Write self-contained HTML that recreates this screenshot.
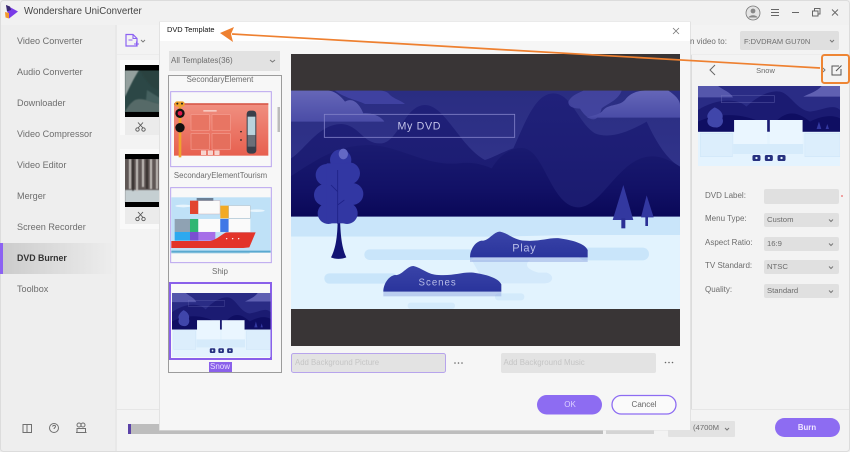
<!DOCTYPE html>
<html><head><meta charset="utf-8"><title>Wondershare UniConverter</title>
<style>
html,body{margin:0;padding:0;width:850px;height:452px;overflow:hidden;background:#f2f2f2}
body{position:relative;font-family:"Liberation Sans",sans-serif}
svg.g{position:absolute;left:0;top:0;filter:blur(.35px)}
.t{position:absolute;white-space:nowrap;line-height:12px;height:12px;font-size:9.1px;color:#6d6d6d;filter:blur(.2px)}
.s{left:17px}
.c{transform:translateX(-50%)}
.l{left:705px;font-size:8px}
.d{left:767px;font-size:7.700px}
</style></head><body>
<svg class="g" width="850" height="452" viewBox="0 0 850 452" xmlns="http://www.w3.org/2000/svg">
<defs>
<linearGradient id="sky" x1="0" y1="0" x2="0" y2="1"><stop offset="0" stop-color="#2a2d82"/><stop offset="1" stop-color="#35378f"/></linearGradient>
<linearGradient id="mid" x1="0" y1="0" x2="0" y2="1"><stop offset="0" stop-color="#20217a"/><stop offset="1" stop-color="#1a1a6e"/></linearGradient>
<linearGradient id="mtn" x1="0" y1="0" x2="0" y2="1"><stop offset="0" stop-color="#1a1b70"/><stop offset=".6" stop-color="#121166"/><stop offset="1" stop-color="#0a0858"/></linearGradient>
<linearGradient id="cl" x1="0" y1="0" x2="0" y2="1"><stop offset="0" stop-color="#6566b8"/><stop offset="1" stop-color="#4a4ca6"/></linearGradient>
<linearGradient id="act" x1="0" y1="0" x2="1" y2="0"><stop offset="0" stop-color="#cbcbcb"/><stop offset="1" stop-color="#eeeeee"/></linearGradient>
<linearGradient id="sal" x1="0" y1="0" x2="0" y2="1"><stop offset="0" stop-color="#f08f80"/><stop offset="1" stop-color="#e7604f"/></linearGradient>
<linearGradient id="isl" x1="0" y1="0" x2="0" y2="1"><stop offset="0" stop-color="#3a44a8"/><stop offset="1" stop-color="#2a349c"/></linearGradient>
<filter id="soft"><feGaussianBlur stdDeviation=".6"/></filter>
<symbol id="snow" viewBox="85 258 425 240" preserveAspectRatio="none">
<rect x="85" y="258" width="425" height="240" fill="#e4f3fe"/>
<rect x="85" y="258" width="425" height="137" fill="#2a2c85"/>
<path d="M85,258V292H190C180,275 160,270 145,258Z" fill="#5557ac"/>
<path d="M400,290C420,280 440,275 455,258H510V290Z" fill="#5f60b2"/>
<path d="M85,330C130,300 200,290 230,320 260,290 300,270 330,275 360,280 380,330 420,335 460,330 490,310 510,330V395H85Z" fill="#1b1b72"/>
<path d="M85,365C150,335 230,340 290,375V395H85ZM305,380C350,320 390,340 420,365 460,345 490,345 510,355V395H305Z" fill="#0f0e62"/>
<path d="M135,322C155,330 162,345 158,355 165,370 150,385 137,382 120,382 108,370 115,355 108,345 120,330 135,322Z" fill="#4046aa"/>
<path d="M447,365l7,22h-14ZM472,372l5,15h-10Z" fill="#3338a0"/>
<rect x="155" y="286" width="158" height="22" fill="none" stroke="#7778bf"/>
<rect x="92" y="400" width="96" height="70" fill="#dceefc" stroke="#c3def5"/>
<rect x="405" y="400" width="105" height="70" fill="#dceefc" stroke="#c3def5"/>
<rect x="193" y="360" width="99" height="72" fill="#eaf6ff"/>
<rect x="300" y="360" width="98" height="72" fill="#eaf6ff"/>
<rect x="190" y="432" width="210" height="30" fill="#d6ebfb"/>
<rect x="248" y="465" width="24" height="18" rx="5" fill="#26307f"/><rect x="285" y="465" width="24" height="18" rx="5" fill="#26307f"/><rect x="323" y="465" width="24" height="18" rx="5" fill="#26307f"/>
<circle cx="260" cy="474" r="3.500" fill="#e4f3fe"/><circle cx="297" cy="474" r="3.500" fill="#e4f3fe"/><circle cx="335" cy="474" r="3.500" fill="#e4f3fe"/>
</symbol>
</defs>

<!-- window -->
<rect width="850" height="452" fill="#f3f3f3"/>
<rect x="0" y="0" width="850" height="25" fill="#f1f1f1"/>
<rect x="0" y="25" width="115" height="427" fill="#eeeeee"/>
<rect x="115" y="25" width="2" height="427" fill="#e8e8e8"/>
<rect x="117" y="54" width="733" height="1" fill="#ececec"/>
<rect x="117" y="409" width="733" height="1" fill="#e6e6e6"/>
<rect x=".5" y=".5" width="849" height="451" rx="3" fill="none" stroke="#dcdcdc"/>
<!-- logo -->
<path d="M6,5 L18,11.500 L9,18.500 Z" fill="#7a3be8"/><path d="M6,5 L10,6.500 L11,10 L7,11.500Z" fill="#3a2a70"/><path d="M5,12 L9,13 L9,18.500 L5.500,17.500Z" fill="#f39a2d"/>
<!-- active -->
<rect x="0" y="243" width="115" height="31" fill="url(#act)"/>
<rect x="0" y="243" width="3" height="31" fill="#8c62f2"/>
<!-- bottom icons -->
<g fill="none" stroke="#707070" stroke-width="1">
<path d="M23,424.500h4v8h-4zM27,424.500h4.500v8h-4.500z"/>
<circle cx="54" cy="428" r="4.500"/><path d="M52.500,426.500c.5,-1.500 3,-1.500 3,0 0,1.200 -1.500,1.200 -1.500,2.500"/>
<circle cx="79" cy="425" r="2"/><circle cx="83" cy="425" r="2"/><path d="M77,432.500v-4h8.500v4zM76,432.500h10.500"/>
</g>
<!-- add file -->
<path d="M126,34.500h7l4,4v7.500h-11z" fill="none" stroke="#8c62f2" stroke-width="1.200"/>
<path d="M133,34.500v4h4M128.500,40h4M134,44h5M136.500,41.500v5" fill="none" stroke="#8c62f2" stroke-width="1.100"/>
<path d="M141,40l2,2 2,-2" fill="none" stroke="#777" stroke-width=".9"/>
<!-- cards -->
<rect x="120" y="60" width="42" height="75" fill="#f9f9f9"/>
<rect x="120" y="149" width="42" height="80" fill="#f9f9f9"/>
<rect x="125" y="65" width="35" height="52" fill="#2c4746"/>
<g filter="url(#soft)">
<path d="M125,70h14C134,78 129,88 125,97Z" fill="#94a09e"/>
<path d="M125,112h35v-8C150,102 142,97 135,100 130,103 127,108 125,112Z" fill="#566a68"/>
<path d="M140,70C148,85 155,90 160,90V70Z" fill="#2b4241"/>
<path d="M147,90l13,8v6l-14,-4Z" fill="#44605f"/>
</g>
<rect x="125" y="65" width="35" height="5.500" fill="#000"/><rect x="125" y="112" width="35" height="5.500" fill="#000"/>
<rect x="125" y="117" width="35" height="18" fill="#ebebeb"/>
<rect x="125" y="154" width="35" height="53" fill="#5f5755"/>
<g filter="url(#soft)">
<rect x="125" y="190" width="35" height="13" fill="#c5cfd2"/>
<path d="M130,159v30M137,159v32M143,159v28M151,159v30M157,159v30" stroke="#c4bfbc" stroke-width="2"/>
<path d="M133,159v32M147,159v30" stroke="#332c2a" stroke-width="1.800"/>
</g>
<rect x="125" y="154" width="35" height="5" fill="#000"/><rect x="125" y="202" width="35" height="5" fill="#000"/>
<rect x="125" y="207" width="35" height="17" fill="#ebebeb"/>
<g fill="none" stroke="#555" stroke-width=".9">
<circle cx="137.500" cy="129.500" r="1.700"/><circle cx="143.500" cy="129.500" r="1.700"/><path d="M138,128l5,-5.500M143,128l-5,-5.500"/>
<circle cx="137.500" cy="219" r="1.700"/><circle cx="143.500" cy="219" r="1.700"/><path d="M138,217.500l5,-5.500M143,217.500l-5,-5.500"/>
</g>
<!-- right panel bits under text -->
<rect x="691" y="55" width="1" height="354" fill="#dcdcdc"/>
<rect x="740" y="31" width="99" height="19" rx="2" fill="#dfdfdf"/>
<path d="M830,40l2,2 2,-2" fill="none" stroke="#777"/>
<path d="M715,65l-5,5 5,5" fill="none" stroke="#666"/>
<path d="M823,68l2,2 -2,2" fill="none" stroke="#777"/>
<path d="M839,66h-7v9h9v-6M836,71l5.500,-5.500" fill="none" stroke="#555" stroke-width="1"/>
<use href="#snow" x="698" y="86" width="142" height="80"/>
<rect x="764" y="189" width="75" height="15" rx="2" fill="#e0e0e0"/>
<rect x="764" y="213" width="75" height="14" rx="2" fill="#e0e0e0"/>
<rect x="764" y="237" width="75" height="14" rx="2" fill="#e0e0e0"/>
<rect x="764" y="260" width="75" height="14" rx="2" fill="#e0e0e0"/>
<rect x="764" y="284" width="75" height="14" rx="2" fill="#e0e0e0"/>
<path d="M829,219.500l2,2 2,-2M829,243.500l2,2 2,-2M829,266.500l2,2 2,-2M829,290.500l2,2 2,-2" fill="none" stroke="#777"/>
<circle cx="842" cy="196" r=".9" fill="#e66"/>
<!-- bottom bar -->
<rect x="128" y="424" width="475" height="10" fill="#bdbdbd"/>
<rect x="128" y="424" width="3" height="10" fill="#5b42a8"/>
<rect x="606" y="430" width="48" height="4" fill="#d4d4d4"/>
<rect x="668" y="421" width="67" height="16" rx="1" fill="#e2e2e2"/>
<path d="M725,428l2,2 2,-2" fill="none" stroke="#777"/>
<rect x="775" y="418" width="65" height="19" rx="9.500" fill="#8d6cf2"/>

<!-- dialog -->
<rect x="159" y="21.500" width="532" height="409" fill="#e2e2e2"/>
<rect x="160" y="22" width="530" height="408" fill="#f6f6f6"/>
<rect x="160" y="22" width="530" height="19" fill="#ffffff"/>
<path d="M673,28l6,6M679,28l-6,6" stroke="#777" stroke-width=".8"/>
<rect x="169" y="51" width="111" height="20" fill="#e2e2e2"/>
<path d="M270,60l2.500,2 2.500,-2" fill="none" stroke="#777"/>
<rect x="168.500" y="75.500" width="113" height="297" fill="#f7f7f7" stroke="#9c9c9c"/>
<rect x="277.500" y="107" width="2.500" height="25" fill="#bbbbbb"/>

<!-- salmon thumb -->
<g transform="translate(160 40) scale(.3333)">
<rect x="32" y="155" width="302" height="225" fill="#f8f8f8" stroke="#b9a4ee" stroke-width="3"/>
<rect x="42" y="190" width="283" height="157" fill="url(#sal)"/>
<rect x="42" y="190" width="283" height="4" fill="#d24c3c"/>
<rect x="93" y="224" width="55" height="47" fill="#e87563" stroke="#f39c8e" stroke-width="2"/>
<rect x="156" y="224" width="55" height="47" fill="#e87563" stroke="#f39c8e" stroke-width="2"/>
<rect x="93" y="281" width="55" height="47" fill="#e56f5d" stroke="#f39c8e" stroke-width="2"/>
<rect x="156" y="281" width="55" height="47" fill="#e56f5d" stroke="#f39c8e" stroke-width="2"/>
<rect x="56" y="185" width="8" height="167" fill="#f0a32d"/>
<rect x="44" y="184" width="30" height="16" rx="7" fill="#f0a32d"/>
<circle cx="52" cy="191" r="3" fill="#222"/><circle cx="66" cy="191" r="3" fill="#222"/>
<circle cx="60" cy="220" r="14" fill="#111"/><circle cx="60" cy="220" r="7" fill="#e0194a"/>
<circle cx="60" cy="263" r="14" fill="#111"/>
<rect x="260" y="212" width="29" height="129" rx="10" fill="#3a3f4a"/>
<rect x="263" y="230" width="23" height="55" fill="#b9d3dd"/>
<rect x="263" y="285" width="23" height="35" fill="#6a6f78"/>
<circle cx="243" cy="275" r="2.500" fill="#222"/><circle cx="243" cy="300" r="2.500" fill="#222"/>
<rect x="124" y="332" width="14" height="12" fill="#f7d3cc" stroke="#fff"/><rect x="144" y="332" width="14" height="12" fill="#f7d3cc" stroke="#fff"/><rect x="164" y="332" width="14" height="12" fill="#f7d3cc" stroke="#fff"/>
<rect x="130" y="210" width="40" height="5" fill="#f7c9c0"/>
</g>
<!-- ship thumb -->
<g transform="translate(160 40) scale(.3333)">
<rect x="32" y="443" width="302" height="225" fill="#f8f8f8" stroke="#b9a4ee" stroke-width="3"/>
<rect x="34" y="472" width="298" height="162" fill="#bfe1f7"/>
<rect x="34" y="632" width="298" height="6" fill="#5aa9d0"/>
<rect x="34" y="638" width="235" height="2" fill="#8cc5e0"/>
<ellipse cx="290" cy="512" rx="24" ry="4" fill="#e8f5fd"/><ellipse cx="70" cy="498" rx="24" ry="4" fill="#e8f5fd"/>
<rect x="90" y="482" width="25" height="40" fill="#e2452f"/>
<rect x="115" y="482" width="65" height="40" fill="#fafafa" stroke="#c99"/>
<rect x="110" y="474" width="50" height="8" fill="#6a7f95"/>
<rect x="181" y="497" width="25" height="38" fill="#f2aa24"/>
<rect x="206" y="497" width="65" height="38" fill="#fafafa" stroke="#aaa"/>
<rect x="44" y="537" width="46" height="39" fill="#8fa2b3"/>
<rect x="90" y="537" width="25" height="39" fill="#2fb673"/>
<rect x="115" y="537" width="65" height="39" fill="#fafafa"/>
<rect x="181" y="537" width="25" height="39" fill="#3f78e6"/>
<rect x="206" y="537" width="65" height="39" fill="#fafafa"/>
<rect x="44" y="576" width="46" height="26" fill="#2da9ef"/>
<rect x="90" y="576" width="26" height="26" fill="#7a4fd0"/>
<rect x="116" y="576" width="50" height="26" fill="#a66ee8"/>
<path d="M34,603H150C170,600 190,578 200,577H287L268,622 250,624H34Z" fill="#e3342a"/>
<circle cx="200" cy="596" r="2" fill="#fff"/><circle cx="218" cy="596" r="2" fill="#fff"/><circle cx="236" cy="596" r="2" fill="#fff"/>
</g>
<!-- snow thumb -->
<rect x="170" y="283" width="101" height="76" fill="#f9f9f9" stroke="#8a60ea" stroke-width="2"/>
<use href="#snow" x="172" y="293" width="98.500" height="64"/>
<rect x="209" y="362" width="23" height="10" fill="#8a60ea"/>

<!-- main preview -->
<rect x="291" y="54" width="389" height="292" fill="#393536"/>
<!-- sky and mountains -->
<g transform="translate(285 50) scale(.33333)">
<rect x="18" y="122" width="1167" height="380" fill="url(#sky)"/>
<path d="M18,325C60,300 100,222 170,222 225,226 235,285 290,280 340,275 360,165 420,165 480,165 525,290 600,330 625,322 665,300 685,295 720,220 750,130 805,130 860,130 880,220 930,250 980,270 1040,240 1085,215 1120,290 1150,330 1185,350V500H18Z" fill="url(#mid)"/>
<path d="M18,378C80,340 150,285 250,285 340,285 420,350 520,340 555,335 585,340 620,355 650,305 690,290 720,295 780,310 800,470 880,472 950,472 1000,330 1090,320 1130,315 1160,335 1185,350V500H18Z" fill="url(#mtn)"/>
<path d="M150,122C180,145 215,150 240,162H360C345,150 330,148 315,135 305,122 290,122 280,122Z" fill="#3f41a0"/>
<path d="M18,122V215H298C285,195 255,188 235,190 225,165 205,140 180,155 165,135 145,122 130,122Z" fill="url(#cl)"/>
<path d="M850,155C860,135 880,130 895,122H1010C1000,150 970,160 950,175 935,235 900,200 885,176 855,175 850,165 850,155Z" fill="#4648a2" opacity=".85"/>
<path d="M905,203C925,195 945,195 955,180 975,160 1000,170 1020,150 1040,122 1070,122 1090,122H1150C1170,135 1185,150 1185,165V203Z" fill="url(#cl)"/>
<rect x="118" y="193" width="571" height="69" fill="none" stroke="#8081c8" stroke-width="2.500"/>
<text x="403" y="238" text-anchor="middle" font-family="'Liberation Sans',sans-serif" font-size="32" letter-spacing="2" fill="#c4c5ea">My DVD</text>
</g>
<!-- ground -->
<g transform="translate(285 200) scale(.33333)">
<rect x="18" y="100" width="1167" height="227" fill="#e2f3fe"/>
<path d="M18,50H1185V105H850L640,110H18Z" fill="#c9e5fa"/>
<path d="M18,110H490C530,115 525,145 480,147H18Z" fill="#e2f3fe"/>
<rect x="238" y="148" width="330" height="32" rx="16" fill="#c9e5fa"/>
<rect x="880" y="143" width="212" height="38" rx="19" fill="#c9e5fa"/>
<rect x="118" y="220" width="220" height="31" rx="15" fill="#c9e5fa"/>
<path d="M560,180H735C715,195 730,210 760,218H785C810,225 805,250 780,250H600Z" fill="#d3e9fb"/>
<rect x="630" y="280" width="88" height="21" rx="10" fill="#d3eafb"/>
<rect x="368" y="308" width="142" height="19" rx="9" fill="#d3eafb"/>
<rect x="555" y="172" width="353" height="14" fill="#8aa0de" opacity=".45"/>
<path d="M555,172C555,150 570,125 590,122 610,125 625,95 645,95 670,100 690,122 720,122 770,125 790,112 825,115 860,120 900,130 908,150V172Z" fill="url(#isl)"/>
<rect x="295" y="275" width="354" height="14" fill="#8aa0de" opacity=".45"/>
<path d="M295,275C295,253 310,228 330,225 350,228 365,198 385,198 410,203 430,225 460,225 510,228 530,215 565,218 600,223 640,233 649,253V275Z" fill="url(#isl)"/>
<text x="718" y="155" text-anchor="middle" font-family="'Liberation Sans',sans-serif" font-size="33" letter-spacing="2" fill="#b9bee8">Play</text>
<text x="458" y="257" text-anchor="middle" font-family="'Liberation Sans',sans-serif" font-size="29" letter-spacing="3" fill="#b9bee8">Scenes</text>
</g>
<!-- trees above ground -->
<g transform="translate(285 50) scale(.33333)">
<path d="M1015,405L1045,510H983Z" fill="#3338a0"/><rect x="1009" y="505" width="12" height="30" fill="#2b2f95"/>
<path d="M1085,436L1106,502H1068Z" fill="#3338a0"/><rect x="1081" y="500" width="8" height="28" fill="#2b2f95"/>
<path d="M158,500C158,540 156,590 138,622 150,628 170,628 184,622 168,590 166,540 165,500Z" fill="#121374"/>
<g fill="#3237a3">
<circle cx="167" cy="330" r="32"/><circle cx="125" cy="375" r="33"/><circle cx="192" cy="370" r="33"/>
<circle cx="120" cy="435" r="33"/><circle cx="202" cy="432" r="33"/><circle cx="130" cy="490" r="32"/><circle cx="186" cy="490" r="32"/>
<rect x="125" y="340" width="70" height="180"/>
</g>
<ellipse cx="175" cy="312" rx="14" ry="16" fill="#6468c4"/>
<path d="M158,360V522M158,425L138,405M158,465L178,450" fill="none" stroke="#1f2288" stroke-width="2.500"/>
</g>

<!-- inputs -->
<rect x="291.500" y="353.500" width="154" height="19" rx="2" fill="#e3e3e3" stroke="#b7a4ec"/>
<rect x="501" y="353" width="155" height="20" rx="2" fill="#e3e3e3"/>
<g fill="#666"><circle cx="455" cy="363" r=".8"/><circle cx="458.500" cy="363" r=".8"/><circle cx="462" cy="363" r=".8"/><circle cx="665.500" cy="362.500" r=".8"/><circle cx="669" cy="362.500" r=".8"/><circle cx="672.500" cy="362.500" r=".8"/></g>
<rect x="537" y="395" width="65" height="19.500" rx="9.700" fill="#8d6cf2"/>
<rect x="612" y="395.500" width="64" height="18.500" rx="9.200" fill="#fafafa" stroke="#8d6cf2" stroke-width="1.300"/>

<!-- annotation -->
<path d="M232,34L820,68" stroke="#ee8030" stroke-width="1.700" fill="none"/>
<path d="M220,33L234,27L231,34L233,42Z" fill="#ee8030"/>
<rect x="822" y="55" width="27" height="28" rx="2.500" fill="none" stroke="#ee8534" stroke-width="2"/>

<!-- title bar controls -->
<circle cx="753" cy="13" r="7" fill="#e4e4e4" stroke="#777" stroke-width=".8"/><circle cx="753" cy="11" r="2.400" fill="#888"/><path d="M748.500,17.500c1,-3 8,-3 9,0" fill="#888"/>
<path d="M771,9.500h8M771,12.500h8M771,15.500h8" stroke="#666" stroke-width=".9"/>
<path d="M792,12.500h7" stroke="#666"/>
<path d="M812.500,11h5.500v5h-5.500zM814.500,11v-2.500h5.500v5.500h-2" fill="none" stroke="#666"/>
<path d="M832,9.500l6,6M838,9.500l-6,6" stroke="#666" stroke-width=".9"/>
</svg>

<div class="t" style="left:24px;top:6px;font-size:9.700px;color:#444">Wondershare UniConverter</div>
<div class="t s" style="top:35px">Video Converter</div>
<div class="t s" style="top:66px">Audio Converter</div>
<div class="t s" style="top:97px">Downloader</div>
<div class="t s" style="top:128px">Video Compressor</div>
<div class="t s" style="top:159px">Video Editor</div>
<div class="t s" style="top:190px">Merger</div>
<div class="t s" style="top:221px">Screen Recorder</div>
<div class="t s" style="top:252px;font-weight:bold;color:#333;font-size:8.800px">DVD Burner</div>
<div class="t s" style="top:283px">Toolbox</div>

<div class="t" style="left:167px;top:24px;font-size:7.400px;color:#111">DVD Template</div>
<div class="t" style="left:171px;top:55px;font-size:8px">All Templates(36)</div>
<div class="t c" style="left:220px;top:74px;font-size:7.900px">SecondaryElement</div>
<div class="t c" style="left:220.500px;top:170px;font-size:7.800px">SecondaryElementTourism</div>
<div class="t c" style="left:220px;top:266px;font-size:8px">Ship</div>
<div class="t c" style="left:220px;top:361px;font-size:8px;color:#e8dcff">Snow</div>

<div class="t" style="left:295px;top:357px;font-size:7.800px;color:#c5c5c5">Add Background Picture</div>
<div class="t" style="left:503.500px;top:357px;font-size:7.900px;color:#c5c5c5">Add Background Music</div>
<div class="t c" style="left:570px;top:399px;font-size:8px;color:#ddd0ff">OK</div>
<div class="t c" style="left:644px;top:399px;font-size:8px;color:#666">Cancel</div>

<div class="t" style="left:690px;top:36px;font-size:8px">n video to:</div>
<div class="t" style="left:744px;top:36px;font-size:7.500px">F:DVDRAM GU70N</div>
<div class="t c" style="left:765.500px;top:65px;font-size:7.500px">Snow</div>
<div class="t l" style="top:190px">DVD Label:</div>
<div class="t l" style="top:213px">Menu Type:</div>
<div class="t l" style="top:237px">Aspect Ratio:</div>
<div class="t l" style="top:260px">TV Standard:</div>
<div class="t l" style="top:284px">Quality:</div>
<div class="t d" style="top:214px">Custom</div>
<div class="t d" style="top:238px">16:9</div>
<div class="t d" style="top:261px">NTSC</div>
<div class="t d" style="top:285px">Standard</div>
<div class="t" style="left:693px;top:422px;font-size:7.700px">(4700M</div>
<div class="t c" style="left:807px;top:421.500px;font-size:7.800px;font-weight:bold;color:#f0e8ff">Burn</div>
</body></html>
